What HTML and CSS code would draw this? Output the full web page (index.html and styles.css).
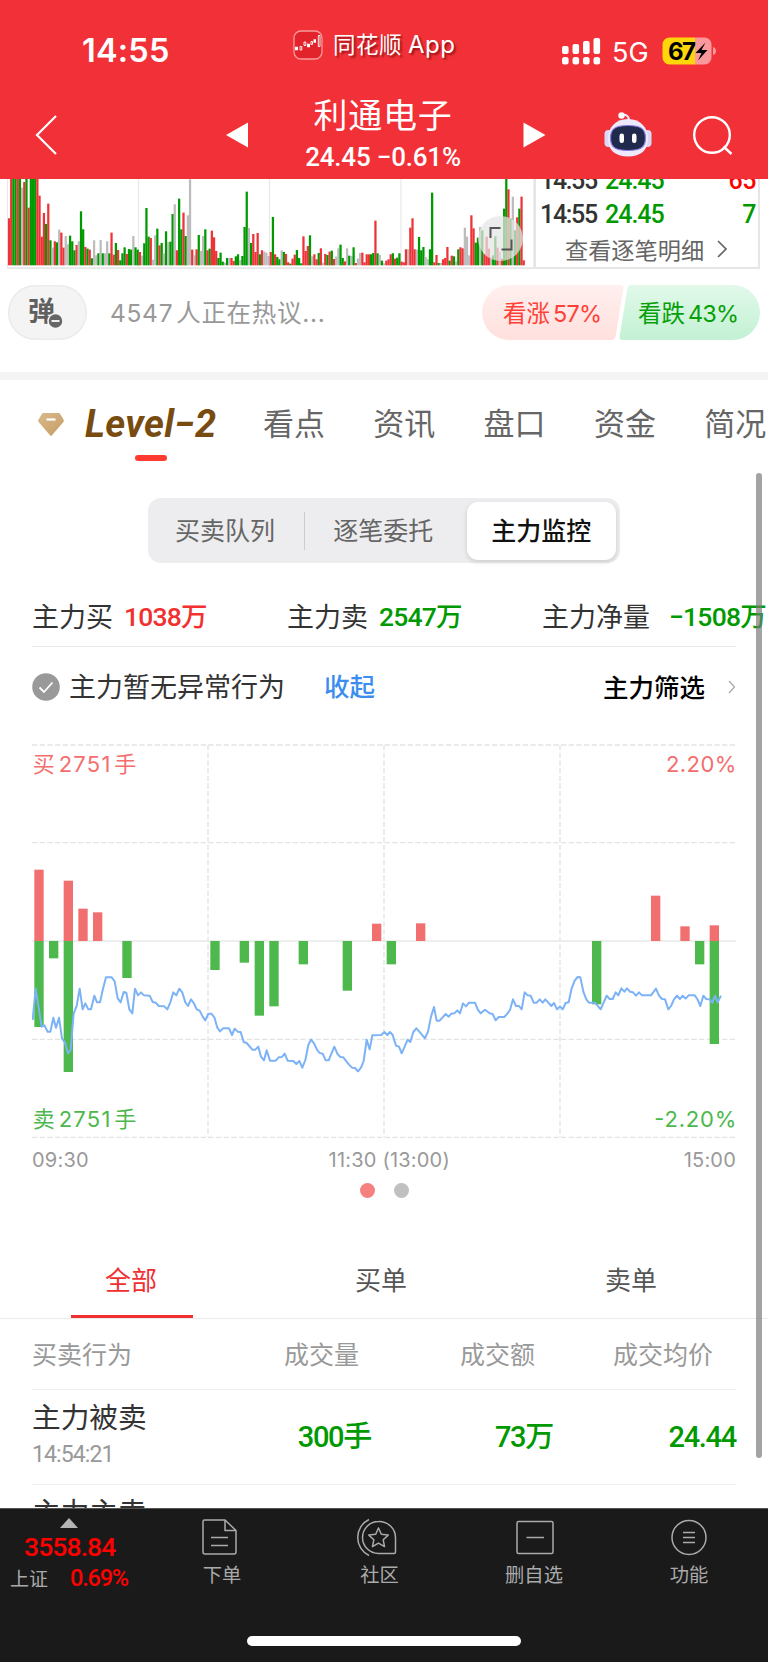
FILE: index.html
```html
<!DOCTYPE html>
<html lang="zh-CN">
<head>
<meta charset="utf-8">
<title>利通电子</title>
<link rel="stylesheet" href="styles.css">
</head>
<body>
<div class="screen">
  <header class="top">
    <div class="status">
      <div class="clock">14:55</div>
      <div class="source">
        <svg class="source-icon" width="30" height="30" viewBox="0 0 30 30"><rect x="1" y="1" width="28" height="28" rx="7" fill="#e2232b" stroke="#f79a9c" stroke-width="1.3"/><path d="M2 18.500h3M14 15.500h3M20.500 11h2.500" stroke="#fff" stroke-width="3.500"/><path d="M7 16.500h1.800v3.500H7zM11 12h1.800v3.500H11zM18 11.500h1.500v3H18zM25.300 5.500h1.700v11h-1.700z" fill="#e2232b" stroke="#fff" stroke-width=".9"/></svg>
        <span class="source-name">同花顺<i>App</i></span>
      </div>
      <div class="signals">
        <svg width="40" height="28" viewBox="0 0 40 28" fill="#fff"><rect x="1" y="9" width="6.600" height="8" rx="2"/><rect x="11.500" y="7" width="6.600" height="10" rx="2"/><rect x="22" y="4" width="6.600" height="13" rx="2"/><rect x="32.500" y="1" width="6.600" height="16" rx="2"/><rect x="1" y="20" width="6.600" height="7.400" rx="2.500"/><rect x="11.500" y="20" width="6.600" height="7.400" rx="2.500"/><rect x="22" y="20" width="6.600" height="7.400" rx="2.500"/><rect x="32.500" y="20" width="6.600" height="7.400" rx="2.500"/></svg>
        <span class="net">5G</span>
        <svg class="battery" width="56" height="28" viewBox="0 0 56 28"><path d="M7.500.5H33v27H7.500a7 7 0 0 1-7-7v-13a7 7 0 0 1 7-7z" fill="#ffd60a"/><path d="M33 .5h9.500a7 7 0 0 1 7 7v13a7 7 0 0 1-7 7H33z" fill="#fa989c"/><path d="M51 10q3 1 3 4t-3 4z" fill="#fa989c"/><text x="6" y="22.500" class="charge">67</text><path d="M43.500 5.500L33.500 16h6l-3.500 7.500L45.500 13h-6z" fill="#000"/></svg>
      </div>
    </div>
    <nav class="titlebar">
      <svg class="back" width="24" height="42" viewBox="0 0 24 42" fill="none" stroke="#fff" stroke-width="2.200"><path d="M21 2L2 21l19 19"/></svg>
      <svg class="prev" width="23" height="26" viewBox="0 0 23 26"><path d="M0 13L22 .5v25z" fill="#fff"/></svg>
      <div class="stock"><h1>利通电子</h1><p>24.45 −0.61%</p></div>
      <svg class="next" width="23" height="26" viewBox="0 0 23 26"><path d="M22.500 13L.5.500v25z" fill="#fff"/></svg>
      <svg class="robot" width="50" height="46" viewBox="0 0 50 46">
        <path d="M18 4.500Q25 2 26 9" fill="none" stroke="#e8e6fb" stroke-width="2"/><circle cx="18.500" cy="4.500" r="3.200" fill="#fff"/>
        <rect x="1.500" y="19" width="8" height="17" rx="4" fill="#dcd9f7"/><rect x="40.500" y="19" width="8" height="17" rx="4" fill="#dcd9f7"/>
        <path d="M25 8C12 8 5 17 5 28s7 17.500 20 17.500S45 39 45 28 38 8 25 8z" fill="#eceafc"/>
        <path d="M25 14.500C12 14.500 7.500 18 7.500 27S12 39.500 25 39.500s17.500-3.500 17.500-12.500S38 14.500 25 14.500z" fill="#1f2a4d" stroke="#8d7be4" stroke-width="1.200"/>
        <rect x="16.500" y="22.500" width="4.500" height="9.500" rx="2.200" fill="#fff"/><rect x="29" y="22.500" width="4.500" height="9.500" rx="2.200" fill="#fff"/>
      </svg>
      <svg class="search" width="42" height="42" viewBox="0 0 42 42" fill="none" stroke="#fff" stroke-width="2.400"><circle cx="20" cy="20" r="17.800"/><path d="M31.500 31.500l8 7.500"/></svg>
    </nav>
  </header>

  <section class="market">
    <svg id="volume" class="volume" width="534" height="91" viewBox="0 179 534 91">
      <path d="M7.500 179v89M138.500 179v89M269.500 179v89M401 179v89M533.800 179v89" stroke="#e9e9e9" stroke-width="1.200"/>
      <g id="volume-bars"></g>
      <path d="M7 268.200h527" stroke="#e6e6e6" stroke-width="1.800"/>
      <circle cx="500.500" cy="238.500" r="22.500" fill="#e4e4e4" fill-opacity=".72"/>
      <path d="M490.500 238v-10h10M511.500 239.500v10h-10" fill="none" stroke="#555" stroke-width="2"/>
    </svg>
    <div class="ticks">
      <div class="tick first"><span>14:55</span><b>24.45</b><em class="up">65</em></div>
      <div class="tick"><span>14:55</span><b>24.45</b><em>7</em></div>
      <div class="more">查看逐笔明细<svg width="10" height="18" viewBox="0 0 10 18" fill="none" stroke="#666" stroke-width="1.700"><path d="M1 1l8 8-8 8"/></svg></div>
    </div>
  </section>

  <section class="discuss">
    <div class="danmu"><svg width="79" height="55" viewBox="0 0 79 55"><text x="20" y="36" class="danmu-text">弹</text><circle cx="47.500" cy="36" r="7.500" fill="#666" stroke="#f4f4f4" stroke-width="1.500"/><path d="M43.500 36h8" stroke="#fff" stroke-width="1.800"/></svg></div>
    <div class="hot">4547<span>人正在热议</span>...</div>
    <svg class="vote" width="278" height="55" viewBox="0 0 278 55">
      <defs><linearGradient id="vr" x1="0" y1="0" x2="0" y2="1"><stop offset="0" stop-color="#fff0ef"/><stop offset="1" stop-color="#ffe0dd"/></linearGradient><linearGradient id="vg" x1="0" y1="0" x2="0" y2="1"><stop offset="0" stop-color="#e2f9ea"/><stop offset="1" stop-color="#c2f1d4"/></linearGradient></defs>
      <path d="M27.500 0H138q4 0 3.300 4l-7.600 47q-.7 4-4.700 4H27.500a27.500 27.500 0 0 1 0-55z" fill="url(#vr)"/>
      <path d="M150 0h100.500a27.500 27.500 0 0 1 0 55H141q-4 0-3.300-4l7.600-47q.7-4 4.700-4z" fill="url(#vg)"/>
      <text class="vote-text" y="36.500" fill="#ff4038"><tspan x="21">看涨</tspan><tspan x="71" textLength="49">57%</tspan></text>
      <text class="vote-text" y="36.500" fill="#07a007"><tspan x="156">看跌</tspan><tspan x="206" textLength="51">43%</tspan></text>
    </svg>
  </section>

  <nav class="tabs">
    <div class="level">
      <svg width="28" height="27" viewBox="0 0 28 27"><defs><linearGradient id="gem" x1="0" y1="0" x2="1" y2="1"><stop offset="0" stop-color="#d9b98c"/><stop offset="1" stop-color="#c59d63"/></linearGradient></defs><path d="M6.500 2h15q1 0 1.500.8l3.600 6q.7 1.100-.2 2.200L14.800 24.500q-.8.800-1.600 0L1.600 11q-.9-1.100-.2-2.200l3.600-6Q5.500 2 6.500 2z" fill="url(#gem)"/><path d="M9.500 8.500h9" stroke="#fff" stroke-width="2.200"/></svg>
      <strong>Level−2</strong>
    </div>
    <span>看点</span><span>资讯</span><span>盘口</span><span>资金</span><span>简况</span>
  </nav>
  <div class="tab-mark"></div>

  <div class="segment"><span>买卖队列</span><i></i><span>逐笔委托</span><span class="on">主力监控</span></div>

  <section class="stats">
    <div class="stat">主力买<b class="red">1038<u>万</u></b></div>
    <div class="stat">主力卖<b>2547<u>万</u></b></div>
    <div class="stat">主力净量<b class="net-flow">−1508<u>万</u></b></div>
  </section>

  <section class="notice">
    <svg width="28" height="28" viewBox="0 0 28 28"><circle cx="14" cy="14" r="13.800" fill="#999"/><path d="M7.500 14.500l4.500 4.500 8.500-9.500" fill="none" stroke="#fff" stroke-width="1.800"/></svg>
    <span class="notice-text">主力暂无异常行为</span><a>收起</a>
    <strong>主力筛选</strong>
    <svg class="go" width="8" height="14" viewBox="0 0 8 14" fill="none" stroke="#aaa" stroke-width="1.300"><path d="M1 1l5.500 6L1 13"/></svg>
  </section>

  <svg class="flow" width="704" height="396" viewBox="96 42 2112 1188">
    <g fill="none" stroke="#e3e3e3" stroke-width="4" stroke-dasharray="16 7"><path d="M96 45h2112M96 338h2112M96 928h2112M96 1222h2112M624 45v1177M1152 45v1177M1680 45v1177"/></g>
    <path d="M96 633h2112" stroke="#e8e8e8" stroke-width="4"/>
    <g id="flow-bars"></g>
    <polyline class="price" points="98,870 107,776 125,890 133,886 143,905 151,905 160,863 168,893 177,863 186,925 195,938 204,970 212,960 221,850 230,828 239,776 248,838 256,820 265,838 273,838 283,797 291,817 300,817 309,776 318,742 335,742 344,754 353,805 362,817 371,786 379,788 388,838 397,850 405,776 414,796 423,787 432,796 449,797 458,816 467,818 476,828 493,829 502,838 511,817 520,787 529,796 538,776 547,788 556,817 564,828 573,808 582,820 590,838 599,842 608,860 616,871 625,851 634,851 643,862 652,893 660,904 669,895 687,895 696,915 704,896 713,905 722,906 731,936 740,939 757,959 766,959 775,950 783,980 792,991 800,961 810,992 827,992 836,982 846,981 854,971 863,992 880,993 889,1002 898,993 907,1013 916,990 925,945 933,929 942,940 951,959 959,969 968,971 977,991 986,991 1003,950 1012,971 1021,981 1030,982 1047,1004 1056,1013 1065,1014 1074,1024 1083,1013 1091,993 1100,929 1109,958 1117,916 1144,915 1153,906 1162,915 1170,906 1178,915 1188,947 1197,950 1205,970 1214,950 1223,929 1231,936 1240,906 1249,895 1258,905 1275,925 1284,905 1293,860 1302,831 1310,872 1319,872 1337,852 1346,860 1354,851 1363,850 1372,841 1380,850 1389,820 1398,829 1407,818 1425,818 1433,838 1442,850 1455,839 1469,850 1478,852 1487,871 1496,861 1513,861 1522,851 1530,840 1539,808 1548,828 1557,828 1565,838 1574,787 1583,796 1592,797 1601,818 1610,818 1619,808 1628,818 1636,808 1654,828 1662,819 1671,838 1680,829 1688,838 1697,819 1706,817 1715,775 1724,752 1733,741 1741,742 1750,785 1759,808 1767,818 1785,818 1802,838 1820,797 1829,807 1838,807 1847,787 1855,796 1864,775 1873,785 1881,775 1890,785 1899,787 1908,797 1917,787 1926,796 1953,796 1968,776 1977,797 1986,807 1995,808 2005,838 2013,828 2022,808 2031,797 2040,807 2048,797 2057,806 2066,796 2084,796 2092,807 2101,828 2110,797 2119,807 2128,808 2137,818 2145,797 2153,817 2163,797"/>
    <g class="flow-label" fill="#f46e6e"><text x="98" y="127">买</text><text x="176" y="127" textLength="155">2751</text><text x="343" y="127">手</text><text x="2209" y="127" text-anchor="end" textLength="211">2.20%</text></g>
    <g class="flow-label" fill="#4cb84c"><text x="98" y="1190">卖</text><text x="176" y="1190" textLength="155">2751</text><text x="343" y="1190">手</text><text x="2209" y="1190" text-anchor="end" textLength="246">-2.20%</text></g>
  </svg>
  <div class="times"><span>09:30</span><span class="noon">11:30 (13:00)</span><span>15:00</span></div>
  <div class="dots"><i class="on"></i><i></i></div>

  <nav class="orders"><span class="on">全部</span><span>买单</span><span>卖单</span></nav>
  <div class="heads"><span>买卖行为</span><span>成交量</span><span>成交额</span><span>成交均价</span></div>
  <div class="row">
    <div class="act"><strong>主力被卖</strong><time>14:54:21</time></div><b>300<u>手</u></b><b>73<u>万</u></b><b>24.44</b>
  </div>
  <div class="row cut"><div class="act"><strong>主力主卖</strong></div></div>
  <div class="scroll"></div>

  <footer class="dock">
    <div class="items">
      <div class="index"><svg width="18" height="10" viewBox="0 0 18 10"><path d="M9 0l9 10H0z" fill="#b4b4b4"/></svg><b>3558.84</b><p>上证<em>0.69%</em></p></div>
      <div class="item i1"><svg width="38" height="40" viewBox="0 0 38 40"><path d="M4.500 3h20.500L36 13.500V35q0 2-2 2H5q-2 0-2-2V4.500Q3 3 4.500 3zM25 3v10.500h11M11 20.500h17M11 28.500h17"/></svg>下单</div>
      <div class="item i2"><svg width="44" height="40" viewBox="0 0 44 40"><path d="M15 2.500a20 20 0 0 0 0 36M24.500 4.500a16 16 0 0 0 0 32H40q1.500 0 1.500-1.500V20.500a16.500 16 0 0 0-17-16z"/><path d="M24.500 11l2.800 6.300 6.900.8-5 4.700 1.300 6.800-6-3.400-6 3.400 1.300-6.800-5-4.700 6.900-.8z"/></svg>社区</div>
      <div class="item i3"><svg width="40" height="40" viewBox="0 0 40 40"><rect x="2" y="4.500" width="36" height="32" rx="1.500"/><path d="M11.500 20.500h17.500"/></svg>删自选</div>
      <div class="item i4"><svg width="40" height="40" viewBox="0 0 40 40"><circle cx="20" cy="20.500" r="17"/><path d="M14 15.500h12M14 20.500h12M14 25.500h12"/></svg>功能</div>
    </div>
    <div class="home"></div>
  </footer>
</div>
<script src="charts.js"></script>
</body>
</html>
```
FILE: styles.css
```css
* { box-sizing: border-box; margin: 0; padding: 0; }
body { background: #fff; font-family: Inter, "Noto Sans CJK SC", sans-serif; color: #333; }
i, em { font-style: normal; }
u { text-decoration: none; }
svg { display: block; flex: none; }
.screen { position: relative; width: 768px; height: 1663px; overflow: hidden; white-space: nowrap; }

.top { height: 179px; background: #f23038; color: #fff; }
.status { display: flex; height: 90px; padding: 0 50px 0 82px; }
.clock { width: 211px; padding-top: 31px; font-size: 32.500px; line-height: 40px; font-weight: 600; letter-spacing: .2px; }
.source { display: flex; gap: 10px; width: 268px; padding-top: 30px; }
.source-name { font-size: 22.500px; line-height: 30px; text-shadow: 2px 2px 2px rgba(90, 0, 0, .6); letter-spacing: .5px; }
.source-name i { margin-left: 6px; font-size: 24px; }
.signals { display: flex; padding-top: 37px; }
.net { width: 49px; padding-left: 11px; font-size: 27px; line-height: 31px; }
.battery { margin-left: 12px; }
.charge { font: 700 24px Inter, sans-serif; letter-spacing: -1.500px; }
.titlebar { display: flex; height: 89px; padding-left: 35px; }
.back { margin: 24px 167px 0 0; }
.prev { margin-top: 32px; }
.stock { width: 268px; text-align: center; }
.stock h1 { margin-top: 5px; font-size: 34px; line-height: 42px; font-weight: 400; letter-spacing: .7px; }
.stock p { margin-top: 5px; font: 500 26px/30px Roboto, sans-serif; letter-spacing: -.2px; }
.next { margin: 32px 57px 0 6px; }
.robot { margin-top: 21px; }
.search { margin: 25px 0 0 39px; }

.market { display: flex; height: 91px; overflow: hidden; }
.ticks { width: 226px; height: 90px; border: 1.500px solid #e6e6e6; border-width: 0 2px 2px; font: 500 25px/34px Roboto, sans-serif; padding: 0 2px 0 4px; }
.tick { display: flex; height: 34px; }
.tick span { width: 65px; letter-spacing: -1.300px; }
.tick b { font-weight: 500; color: #009a00; letter-spacing: -1px; }
.tick em { margin-left: auto; color: #009a00; letter-spacing: -.5px; }
.tick .up { color: #f00; }
.tick.first { margin-top: -15px; }
.more { display: flex; align-items: center; gap: 13px; padding-left: 25px; height: 34px; font: 23.200px/34px "Noto Sans CJK SC", sans-serif; color: #666; }

.discuss { display: flex; height: 102px; padding: 15px 8px 0; }
.danmu { width: 79px; height: 55px; border-radius: 28px; background: #f4f4f4; box-shadow: inset 0 0 0 1.500px #ebebeb; }
.danmu-text { font: 700 27px "Noto Sans CJK SC", sans-serif; fill: #606060; }
.hot { margin-left: 23px; font-size: 24.500px; line-height: 57px; color: #999; letter-spacing: .7px; }
.hot span { margin-left: 3px; }
.vote { margin-left: auto; }
.vote-text { font: 23.500px Inter, "Noto Sans CJK SC", sans-serif; }

.tabs { display: flex; height: 83px; padding: 9px 0 0; border-top: 8px solid #f4f4f4; font-size: 31px; line-height: 70px; color: #666; }
.tabs span { width: 110.300px; flex: none; }
.level { display: flex; align-items: center; gap: 20px; width: 263px; padding-left: 37px; flex: none; height: 70px; }
.level strong { font: italic 700 38px/72px Roboto, sans-serif; letter-spacing: .3px; color: #784b10; }
.tab-mark { width: 32px; height: 6px; margin: 0 0 37px 135px; border-radius: 3px; background: #ff3a30; }

.segment { display: flex; align-items: center; width: 472px; height: 65px; margin-left: 148px; padding: 4px; border-radius: 13px; background: #ededef; font-size: 25px; color: #666; line-height: 58px; }
.segment span { width: 152px; padding-left: 23px; }
.segment i { width: 1.500px; height: 38px; background: #ccc; }
.segment span + i + span { width: 162px; padding-left: 28px; }
.segment .on { width: 149px; padding-left: 24px; border-radius: 11px; background: #fff; color: #111; font-weight: 500; box-shadow: 0 2px 5px rgba(0, 0, 0, .14); }

.stats { display: flex; height: 84px; margin: 0 32px; padding-top: 34px; border-bottom: 1.500px solid #e9e9e9; font-size: 27px; line-height: 42px; }
.stat { width: 255px; flex: none; }
.stat b { margin-left: 11px; font: 500 26.500px/38px Roboto, "Noto Sans CJK SC", sans-serif; color: #009a00; letter-spacing: -.8px; vertical-align: 1px; }
.stat .red { color: #f23030; }
.stat .net-flow { margin-left: 19px; }
.notice { display: flex; align-items: center; height: 80px; padding: 0 32px; font-size: 27px; line-height: 36px; }
.notice-text { margin: 2px 0 0 9px; }
.notice a { margin: 0 0 0 39px; font-size: 25.500px; font-weight: 500; color: #3b8df0; }
.notice strong { margin: 1px 0 0 auto; font-size: 25.500px; font-weight: 500; color: #000; }
.go { margin-left: 23px; }

.flow { margin: 17px 0 0 32px; }
.price { fill: none; stroke: #7cb2f6; stroke-width: 6; stroke-linejoin: round; }
.flow-label { font: 66px Inter, "Noto Sans CJK SC", sans-serif; }
.times { display: flex; justify-content: space-between; margin: 5px 32px 0; font-size: 20px; line-height: 30px; color: #999; letter-spacing: .2px; }
.noon { padding-left: 6px; }
.dots { display: flex; justify-content: center; gap: 19px; height: 50px; padding-top: 8px; }
.dots i { width: 15px; height: 15px; border-radius: 50%; background: #c0c0c0; }
.dots .on { background: #f58080; }
.orders { display: flex; height: 94px; border-bottom: 1.500px solid #ececec; padding-left: 6px; font-size: 26px; line-height: 112px; color: #555; }
.orders span { width: 250px; text-align: center; }
.orders .on { color: #f03030; background: linear-gradient(#f03030, #f03030) 65px 90px / 122px 4px no-repeat; }
.heads { display: grid; grid-template-columns: 252px 176px 153px auto; height: 71px; margin: 0 32px; border-bottom: 1.500px solid #efefef; font-size: 25px; line-height: 73px; color: #999; }
.row { display: grid; grid-template-columns: 240px 99px 182px 183px; height: 95px; margin: 0 32px; border-bottom: 1.500px solid #efefef; }
.row b { font: 500 29px/95px Roboto, "Noto Sans CJK SC", sans-serif; color: #009a00; text-align: right; letter-spacing: -1.300px; }
.act { display: flex; flex-direction: column; padding-top: 7px; }
.act strong { font-size: 28.700px; line-height: 41px; font-weight: 400; }
.act time { font: 23px/34px Roboto, sans-serif; letter-spacing: -.9px; color: #999; }
.cut { height: 23px; overflow: hidden; border: 0; }
.scroll { position: absolute; left: 756px; top: 473px; width: 6px; height: 985px; border-radius: 3px; background: rgba(120, 120, 120, .68); }

.dock { height: 154px; background: #1a1a1a; border-top: 1px solid #555; color: #aaa; }
.items { display: flex; height: 127px; }
.index { width: 138px; padding-top: 9px; }
.index svg { margin-left: 60px; }
.index b { display: block; margin: 3px 0 0 24px; font: 500 26.500px/31px Roboto, sans-serif; color: #f00; letter-spacing: -.9px; }
.index p { margin: 1px 0 0 10px; font-size: 19px; line-height: 30px; }
.index em { margin-left: 22px; font: 500 23.500px/30px Roboto, sans-serif; letter-spacing: -1.200px; color: #f00; }
.item { display: flex; flex-direction: column; align-items: center; padding-top: 8px; font-size: 19.300px; line-height: 37px; }
.item svg { fill: none; stroke: #aaa; stroke-width: 1.500; stroke-linejoin: round; }
.i1 { width: 168px; }
.i1 svg { margin-left: -6px; }
.i2 { width: 146px; padding-left: 1px; }
.i2 svg { margin-left: -7px; }
.i3 { width: 164px; }
.i3 svg { margin-left: 2px; }
.i4 { width: 146px; }
.home { width: 274px; height: 10px; margin: 0 0 0 247px; border-radius: 5px; background: #fff; }
```
FILE: charts.js
```javascript
const NS = 'http://www.w3.org/2000/svg';

function bar(parent, x, y, w, h, fill) {
  const r = document.createElementNS(NS, 'rect');
  Object.entries({ x, y, width: w, height: h, fill }).forEach(([k, v]) => r.setAttribute(k, v));
  parent.appendChild(r);
}

// One entry per minute: colour (r up, g down, n flat) and height in thirds of a pixel.
const volume = `r141 r270 g270 g270 r270 g270 n233 r250 g270 r173 g270 g270 g270 r270 r209 r86 r157 g124 r185 g75
n53 r72 g69 n107 r98 r53 n88 n63 g89 g72 g45 r61 n72 g162 g108 r55 g50 r47 g21 n75 n30 g36 n76 g36 n36 n72 g36 r98 r32 g67
r46 g15 g36 g54 r34 g49 g47 n88 g54 g47 r40 n29 g66 g172 g86 r82 n17 n90 g110 r60 g67 n36 g102 n69 g71 g154 n183 r45 g200 g108
r158 g88 n150 n258 r47 n30 r48 g91 n43 n88 g108 r45 g50 r104 r84 r43 g22 g38 g11 n8 g22 n22 r22 r13 g27 g33 n16 g28 g115 g221
n112 g67 r94 r40 r97 g33 r45 n41 n38 n28 r40 g145 r33 g25 g18 n45 g40 r34 r9 g5 r20 r32 g46 g22 g6 r87 r43 r58 g90 n27
r33 r18 g37 r51 n8 r34 g31 r41 g44 r19 n26 n51 g62 g22 r12 n51 g29 n28 g54 r7 n20 n37 r38 r9 r33 r33 g33 g37 r134 g36
n31 g14 n6 r14 r18 r33 g36 r20 g23 g36 r11 r9 r48 n48 r113 r141 r48 n47 g85 g45 g55 n25 n18 g48 g218 r9 r31 g7 n7 r18
r22 r55 g14 r29 g27 n12 g48 r54 r51 n113 n86 n30 r150 r111 g68 g83 n115 g105 r35 r86 r50 n25 g30 g87 r53 n40 r20 g170 g270 r228
g140 n206 g105 r144 g170 r206 r15`.split(/\s+/);
const tones = { r: '#ee3338', g: '#009a00', n: '#bcbcbc' };
const volumeGroup = document.getElementById('volume-bars');
volume.forEach((v, i) => {
  const h = Number(v.slice(1)) / 3;
  bar(volumeGroup, 7.9 + i * 2.181, 265.3 - h, 2.25, h, tones[v[0]]);
});

// [x, height above the axis, depth below the axis]
const flow = [[103, 214, 258], [147, 0, 52], [191, 181, 393], [235, 97, 0], [279, 86, 0], [367, 0, 111], [631, 0, 87],
  [719, 0, 65], [764, 0, 224], [808, 0, 196], [896, 0, 70], [1028, 0, 149], [1116, 52, 0], [1160, 0, 70], [1248, 53, 0],
  [1776, 0, 190], [1953, 136, 0], [2041, 44, 0], [2085, 0, 70], [2129, 47, 309]];
const flowGroup = document.getElementById('flow-bars');
flow.forEach(([x, up, down]) => {
  if (up) bar(flowGroup, x, 633 - up, 28, up, '#f26f70');
  if (down) bar(flowGroup, x, 633, 28, down, '#4db84b');
});
```
